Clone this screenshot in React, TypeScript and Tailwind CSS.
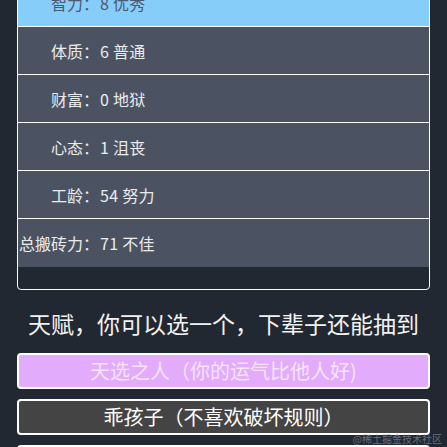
import React from 'react';

const stats = [
  { label: '智力：', value: '8 优秀', active: true },
  { label: '体质：', value: '6 普通' },
  { label: '财富：', value: '0 地狱' },
  { label: '心态：', value: '1 沮丧' },
  { label: '工龄：', value: '54 努力' },
  { label: '总搬砖力：', value: '71 不佳' },
];

const talents = [
  { text: '天选之人（你的运气比他人好)', picked: true },
  { text: '乖孩子（不喜欢破坏规则）' },
  { text: '天生神力（搬砖更快）' },
];

export default function App() {
  return (
    <div
      className="relative h-[447px] overflow-hidden bg-[#222831]"
      style={{ fontFamily: '"Noto Sans CJK SC", "Noto Sans", sans-serif' }}
    >
      {/* 属性面板（已滚动） */}
      <div className="-mt-[22px] mx-[17px] border border-white rounded-b-[4px] pb-[22px]">
        <div className="divide-y divide-white">
          {stats.map((s) => (
            <div
              key={s.label}
              className={`h-[48px] flex items-center text-[16px] ${s.active ? 'bg-[#87cdf9] text-[#4b5a6e]' : 'bg-[#4b5363] text-[#ebebeb]'}`}
            >
              <span className="w-[81px] shrink-0 text-right whitespace-nowrap">{s.label}</span>
              <span className="ml-[1px] whitespace-nowrap tracking-[0.3px]">{s.value}</span>
            </div>
          ))}
        </div>
      </div>

      <h2 className="mt-[16px] h-[34px] leading-[34px] text-center text-[23px] text-[#f2f2f2] whitespace-nowrap">
        天赋，你可以选一个，下辈子还能抽到
      </h2>

      <div className="mt-[13px] mx-[17px] flex flex-col gap-[10px]">
        {talents.map((t) => (
          <button
            key={t.text}
            className={`h-[36px] shrink-0 border-2 border-white rounded-[4px] text-[20px] leading-none whitespace-nowrap ${t.picked ? 'bg-[#e3abfc] text-[#f3e4f6]' : 'bg-[#444444] text-white'}`}
          >
            {t.text}
          </button>
        ))}
      </div>

      <span className="absolute right-[5px] bottom-[3px] text-[10px] leading-none text-[#8a8f97]/70">
        @稀土掘金技术社区
      </span>
    </div>
  );
}
